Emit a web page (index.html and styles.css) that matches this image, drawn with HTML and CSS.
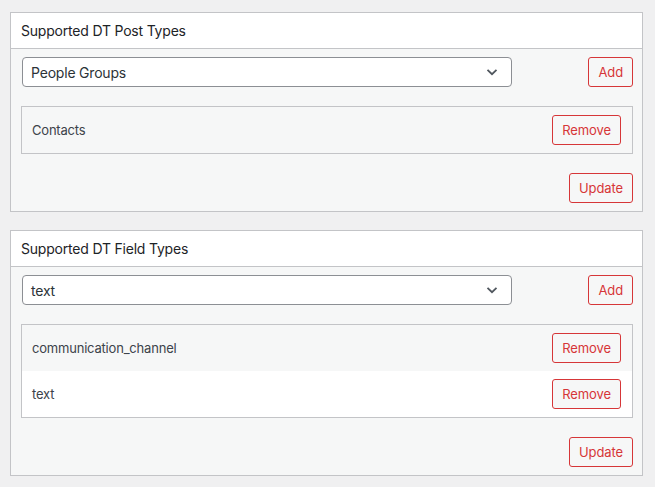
FILE: index.html
```html
<!DOCTYPE html>
<html>
<head>
<meta charset="utf-8">
<link rel="stylesheet" href="styles.css">
</head>
<body>
<div class="page">
  <section class="panel">
    <h2 class="panel-title">Supported DT Post Types</h2>
    <div class="panel-body">
      <div class="select-row">
        <div class="select">
          <span>People Groups</span>
          <svg class="chevron" width="12" height="8" viewBox="0 0 12 8"><path d="M1.5 1.8 L6 6.2 L10.5 1.8" fill="none" stroke="#50575e" stroke-width="1.8"/></svg>
        </div>
        <button class="btn">Add</button>
      </div>
      <div class="list">
        <div class="list-row"><span>Contacts</span><button class="btn">Remove</button></div>
      </div>
      <div class="footer"><button class="btn">Update</button></div>
    </div>
  </section>
  <section class="panel">
    <h2 class="panel-title">Supported DT Field Types</h2>
    <div class="panel-body">
      <div class="select-row">
        <div class="select">
          <span>text</span>
          <svg class="chevron" width="12" height="8" viewBox="0 0 12 8"><path d="M1.5 1.8 L6 6.2 L10.5 1.8" fill="none" stroke="#50575e" stroke-width="1.8"/></svg>
        </div>
        <button class="btn">Add</button>
      </div>
      <div class="list">
        <div class="list-row"><span>communication_channel</span><button class="btn">Remove</button></div>
        <div class="list-row"><span>text</span><button class="btn">Remove</button></div>
      </div>
      <div class="footer"><button class="btn">Update</button></div>
    </div>
  </section>
</div>
</body>
</html>
```
FILE: styles.css
```css
html, body {
  margin: 0;
  padding: 0;
  background: #f0f0f1;
  font-family: Inter, "Noto Sans", sans-serif;
  color: #1d2327;
  letter-spacing: -0.2px;
}
.page {
  padding: 12px 12px 0 10px;
  display: flex;
  flex-direction: column;
  gap: 18px;
}
.panel {
  border: 1px solid #c3c4c7;
  background: #f6f7f7;
}
.panel-title {
  margin: 0;
  background: #fff;
  border-bottom: 1px solid #c3c4c7;
  font-size: 14px;
  font-weight: 400;
  line-height: 19px;
  padding: 8px 10px 8px;
  color: #1d2327;
}
.panel-body {
  padding: 8px 9px 8px 10px;
}
.select-row {
  display: flex;
  justify-content: space-between;
  align-items: center;
  padding-left: 1px;
}
.select {
  box-sizing: border-box;
  width: 490px;
  height: 30px;
  border: 1px solid #8c8f94;
  border-radius: 4px;
  background: #fff;
  display: flex;
  align-items: center;
  justify-content: space-between;
  padding: 0 13px 0 8px;
  font-size: 14px;
  color: #2c3338;
}
.chevron { display: block; }
.btn {
  box-sizing: border-box;
  height: 30px;
  padding: 0 9px;
  border: 1px solid #d63638;
  border-radius: 3px;
  background: #f6f7f7;
  color: #d63638;
  font-family: inherit;
  font-size: 13px;
  line-height: 28px;
  letter-spacing: -0.1px;
}
.list {
  margin-top: 19px;
  border: 1px solid #c3c4c7;
}
.list-row {
  display: flex;
  justify-content: space-between;
  align-items: center;
  height: 46px;
  padding: 0 11px 0 10px;
  font-size: 13px;
  color: #3c434a;
  background: #f6f7f7;
}
.list-row:nth-child(even) { background: #fff; }
.footer {
  margin-top: 19px;
  display: flex;
  justify-content: flex-end;
}
```
